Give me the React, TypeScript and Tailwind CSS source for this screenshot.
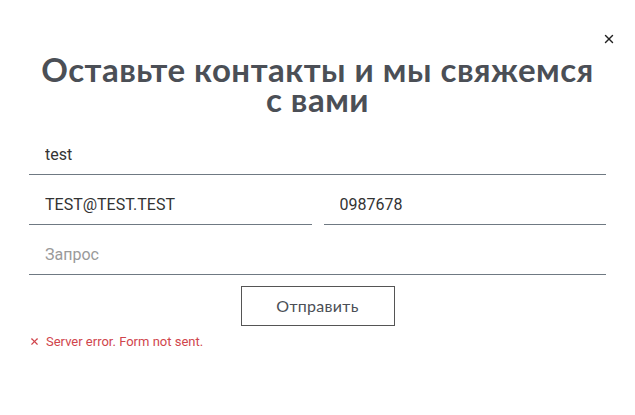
import { X } from 'lucide-react'

const inputClass =
  "w-full h-10 px-4 bg-transparent border-b border-[#6f7982] text-[16px] text-[#333] placeholder:text-[#9a9a9a] outline-none font-['Roboto',sans-serif]"

export default function App() {
  return (
    <div className="relative w-[635px] h-[415px] bg-white font-['Lato',sans-serif]">
      {/* Close */}
      <button className="absolute right-[19px] top-[32px] text-[#222]">
        <X size={14} strokeWidth={2.5} />
      </button>

      <div className="px-[29px] pt-[54px]">
        <h2 className="text-center text-[33px] leading-[30px] font-bold text-[#4b4f56] tracking-[0.5px]">
          <span className="whitespace-nowrap">Оставьте контакты и мы свяжемся</span>
          <br />с вами
        </h2>

        <form className="mt-[21px] flex flex-col gap-[10px]">
          <input className={inputClass} defaultValue="test" />
          <div className="flex gap-[12px]">
            <input className={inputClass} defaultValue="TEST@TEST.TEST" />
            <input className={inputClass} defaultValue="0987678" />
          </div>
          <input className={inputClass} placeholder="Запрос" />
          <div className="flex justify-center mt-[1px]">
            <button
              type="button"
              className="w-[154px] h-[40px] border border-[#555] text-[16px] text-[#4b4f56] bg-white tracking-[0.3px]"
            >
              Отправить
            </button>
          </div>
          <div className="-mt-[4px] flex items-center gap-[6px] text-[13px] text-[#d0454c] font-['Roboto',sans-serif]">
            <X size={11} strokeWidth={2.5} />
            <span>Server error. Form not sent.</span>
          </div>
        </form>
      </div>
    </div>
  )
}
